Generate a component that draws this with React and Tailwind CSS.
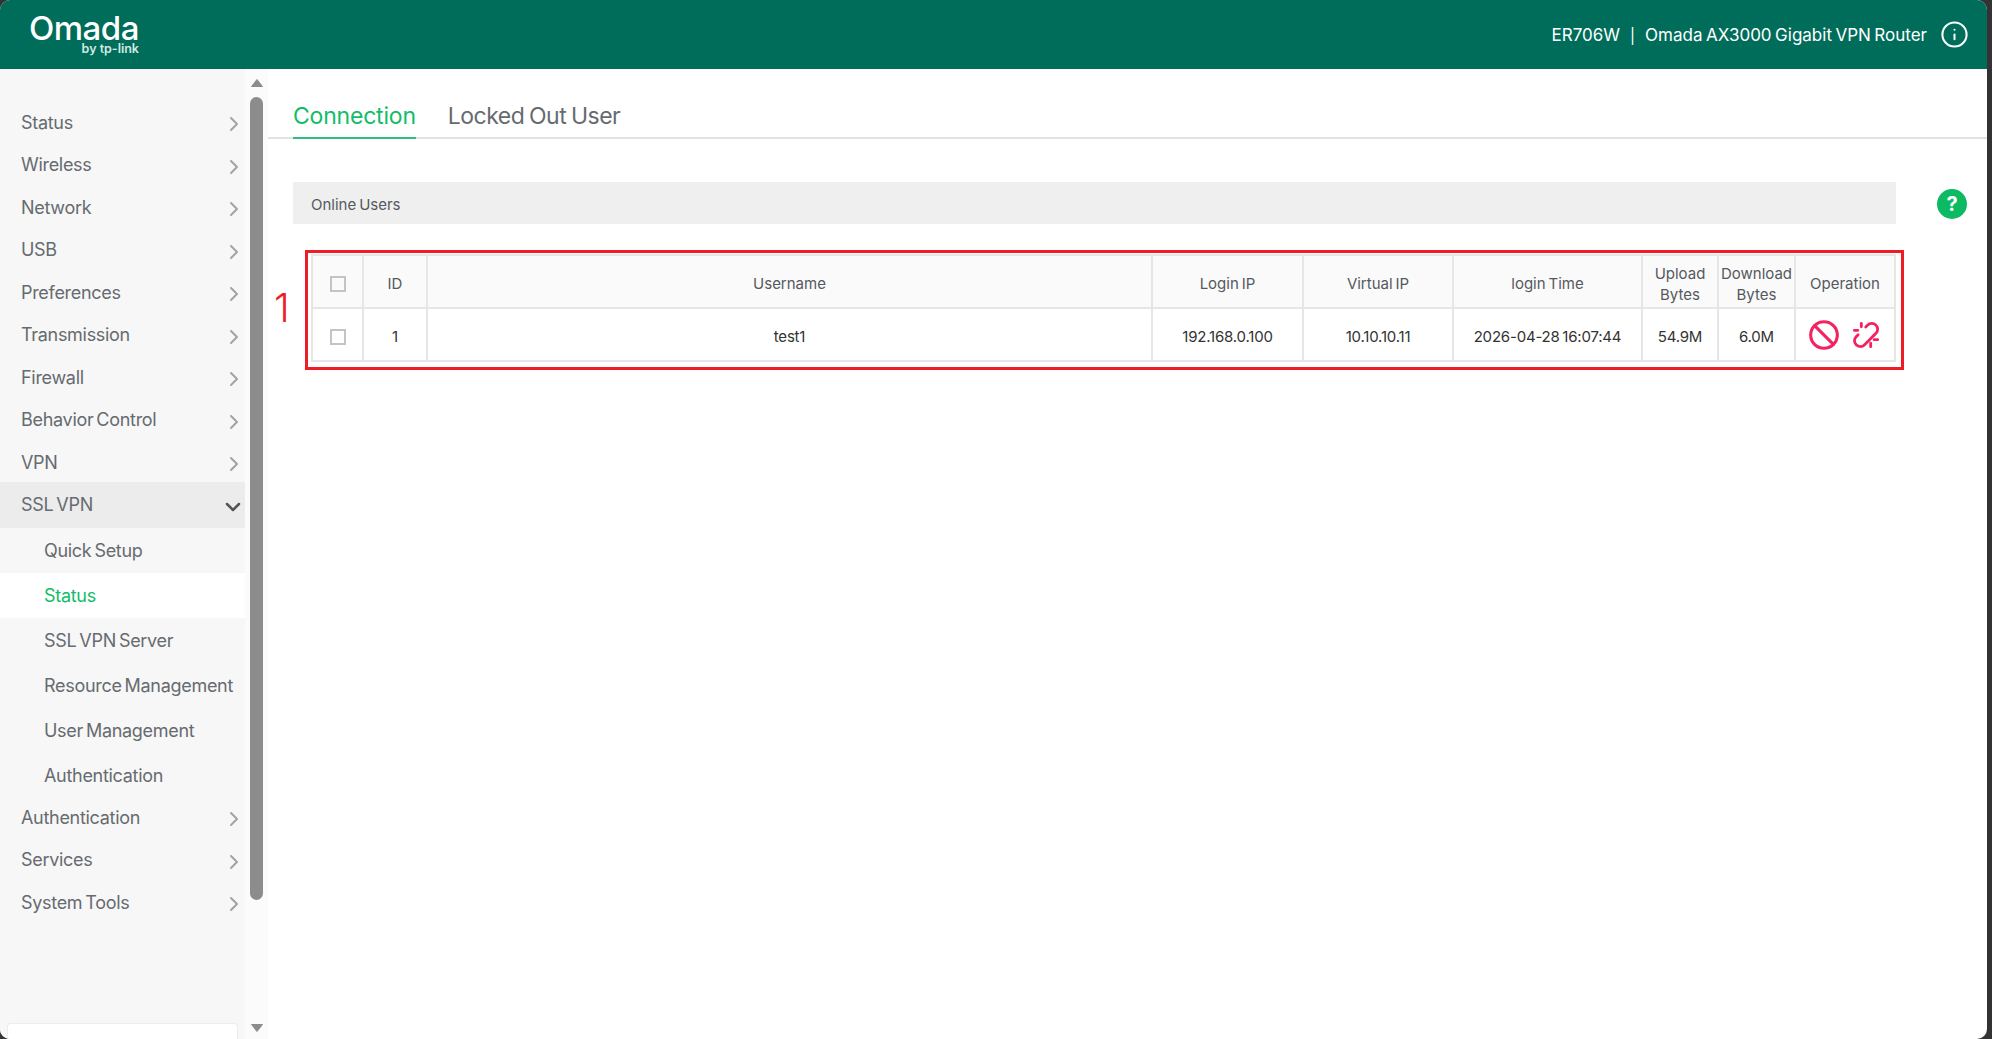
import { ChevronRight, ChevronDown, Info, Ban } from 'lucide-react'

const FONT = "font-['Inter','Noto_Sans',sans-serif]"

const topMenu = ['Status', 'Wireless', 'Network', 'USB', 'Preferences', 'Transmission', 'Firewall', 'Behavior Control', 'VPN']
const subMenu = ['Quick Setup', 'Status', 'SSL VPN Server', 'Resource Management', 'User Management', 'Authentication']
const bottomMenu = ['Authentication', 'Services', 'System Tools']

function MenuRow({ label }) {
  return (
    <div className="flex h-[46px] -mt-[3.5px] items-center justify-between pl-[21px] text-[#666b70]">
      <span>{label}</span>
      <ChevronRight size={24} strokeWidth={2} className="mt-1 -mr-px text-[#a3a3a3]" />
    </div>
  )
}

function Checkbox() {
  return <span className="mx-auto block h-4 w-4 border-2 border-[#c4c4c4]" />
}

function BrokenLink() {
  return (
    <svg width="28" height="28" viewBox="0 0 24 24" fill="none" stroke="currentColor" strokeWidth="2.4" strokeLinecap="round" strokeLinejoin="round">
      <path d="m18.84 12.25 1.72-1.71a5 5 0 0 0-7.07-7.07l-1.72 1.71" />
      <path d="M18.84 12.25 10.6 20.5a5 5 0 0 1-7.07-7.07l1.71-1.71" />
      <path d="M8 2v3M2 8h3M16 19v3M19 16h3" />
    </svg>
  )
}

const headCell = 'border-2 border-[#e6e6e6] pt-[4px] text-center font-normal leading-[21px] text-[#55595e]'
const bodyCell = 'border-2 border-[#e6e6e6] pt-[5px] text-center tracking-[-0.2px] text-[#333]'

export default function App() {
  return (
    <div className={`flex h-[1039px] w-full overflow-hidden bg-[#333] [word-spacing:-0.08em] ${FONT}`}>
      <div className="flex h-full w-[1987px] flex-col overflow-hidden rounded-[10px] bg-white">
        {/* Header */}
        <div className="flex h-[69px] shrink-0 items-center justify-between bg-[#006d5b] pl-[31px] pr-[18px] text-white">
          <div className="flex w-[108px] flex-col items-end leading-none [word-spacing:0]">
            <span className="text-[33px] font-medium leading-[28px] tracking-[-0.5px]">Omada</span>
            <span className="text-[12.5px] font-semibold leading-[14px] text-[#d5e8e3]">by tp-link</span>
          </div>
          <div className="flex items-center text-[17px]">
            <span className="pt-[3px]">ER706W</span>
            <span className="mx-[10px] pt-[3px] text-[15px]">|</span>
            <span className="pt-[3px]">Omada AX3000 Gigabit VPN Router</span>
            <Info size={29} strokeWidth={1.7} className="ml-[13px]" />
          </div>
        </div>

        <div className="flex min-h-0 flex-1">
          {/* Sidebar */}
          <div className="flex w-[245px] shrink-0 flex-col bg-[#f7f7f7] text-[18px] tracking-[-0.3px] [word-spacing:-0.1em]">
            <div className="flex-1 pt-[33.5px]">
              {topMenu.map((label) => (
                <MenuRow key={label} label={label} />
              ))}
              <div className="-mt-[3.5px] flex h-[46px] items-center justify-between bg-[#ececec] pl-[21px] text-[#666b70]">
                <span>SSL VPN</span>
                <ChevronDown size={24} strokeWidth={2.5} className="mt-1 mr-0 text-[#555]" />
              </div>
              {subMenu.map((label) => (
                <div
                  key={label}
                  className={`flex h-[45px] items-center pl-11 ${label === 'Status' ? 'bg-white text-[#12bc68]' : 'text-[#666b70]'}`}
                >
                  {label}
                </div>
              ))}
              {bottomMenu.map((label) => (
                <MenuRow key={label} label={label} />
              ))}
            </div>
            <div className="mx-[7px] h-4 shrink-0 rounded-t-[4px] border border-b-0 border-[#ececec] bg-white" />
          </div>

          {/* Scrollbar */}
          <div className="flex w-[23px] shrink-0 flex-col items-center bg-[#fbfbfb] pt-[10px]">
            <svg width="12" height="8" viewBox="0 0 12 8" className="shrink-0">
              <path d="M6 0.5 L11.5 7.5 H0.5 Z" fill="#8c8c8c" stroke="#8c8c8c" strokeLinejoin="round" />
            </svg>
            <div className="mt-[10px] h-[803px] w-[13px] shrink-0 rounded-full bg-[#8c8c8c]" />
            <svg width="12" height="8" viewBox="0 0 12 8" className="mt-[124px] shrink-0">
              <path d="M6 7.5 L11.5 0.5 H0.5 Z" fill="#8c8c8c" stroke="#8c8c8c" strokeLinejoin="round" />
            </svg>
          </div>

          {/* Content */}
          <div className="min-w-0 flex-1">
            <div className="flex h-[70px] items-start border-b-2 border-[#e3e3e3] pl-[25px] text-[23px] tracking-[-0.2px]">
              <div className="flex h-[70px] items-center border-b-2 border-[#2fbf7f] pt-[26px] text-[#12bc68]">Connection</div>
              <div className="ml-[32px] flex h-[70px] items-center pt-[24px] tracking-[-0.5px] text-[#666b70]">Locked Out User</div>
            </div>

            <div className="mt-[43px] flex items-center pl-[25px]">
              <div className="flex h-[42px] w-[1603px] items-center bg-[#efefef] pl-[18px] pt-[4px] text-[15px] text-[#55595e]">Online Users</div>
              <div className="ml-[41px] mt-[2px] flex h-[30px] w-[30px] items-center justify-center rounded-full bg-[#0dba64] text-[20px] font-bold text-white">?</div>
            </div>

            {/* Table with annotation */}
            <div className="relative ml-[43px] mt-[30px] w-[1583px]">
              <table className="w-full table-fixed border-collapse text-[15px]">
                <colgroup>
                  <col className="w-[51px]" />
                  <col className="w-[64px]" />
                  <col className="w-[725px]" />
                  <col className="w-[151px]" />
                  <col className="w-[150px]" />
                  <col className="w-[189px]" />
                  <col className="w-[76px]" />
                  <col className="w-[77px]" />
                  <col className="w-[100px]" />
                </colgroup>
                <thead>
                  <tr className="h-[53px] bg-[#fafafa]">
                    <th className={headCell}><Checkbox /></th>
                    <th className={headCell}>ID</th>
                    <th className={headCell}>Username</th>
                    <th className={headCell}>Login IP</th>
                    <th className={headCell}>Virtual IP</th>
                    <th className={headCell}>login Time</th>
                    <th className={headCell}>Upload<br />Bytes</th>
                    <th className={headCell}>Download<br />Bytes</th>
                    <th className={headCell}>Operation</th>
                  </tr>
                </thead>
                <tbody>
                  <tr className="h-[53px]">
                    <td className={bodyCell}><Checkbox /></td>
                    <td className={bodyCell}>1</td>
                    <td className={bodyCell}>test1</td>
                    <td className={bodyCell}>192.168.0.100</td>
                    <td className={bodyCell}>10.10.10.11</td>
                    <td className={bodyCell}>2026-04-28 16:07:44</td>
                    <td className={bodyCell}>54.9M</td>
                    <td className={bodyCell}>6.0M</td>
                    <td className={bodyCell}>
                      <div className="-mt-[5px] flex items-center justify-center gap-[12px] pr-[3px] text-[#f5225f]">
                        <Ban size={32} strokeWidth={2.3} />
                        <BrokenLink />
                      </div>
                    </td>
                  </tr>
                </tbody>
              </table>
              <div className="absolute -left-[6px] -right-[10px] -top-[4px] -bottom-[8px] border-[3px] border-[#ee1c25]" />
              <span className="absolute -left-[37px] top-[30px] text-[40px] font-light leading-[48px] text-[#ee1c25]">1</span>
            </div>
          </div>
        </div>
      </div>
    </div>
  )
}
